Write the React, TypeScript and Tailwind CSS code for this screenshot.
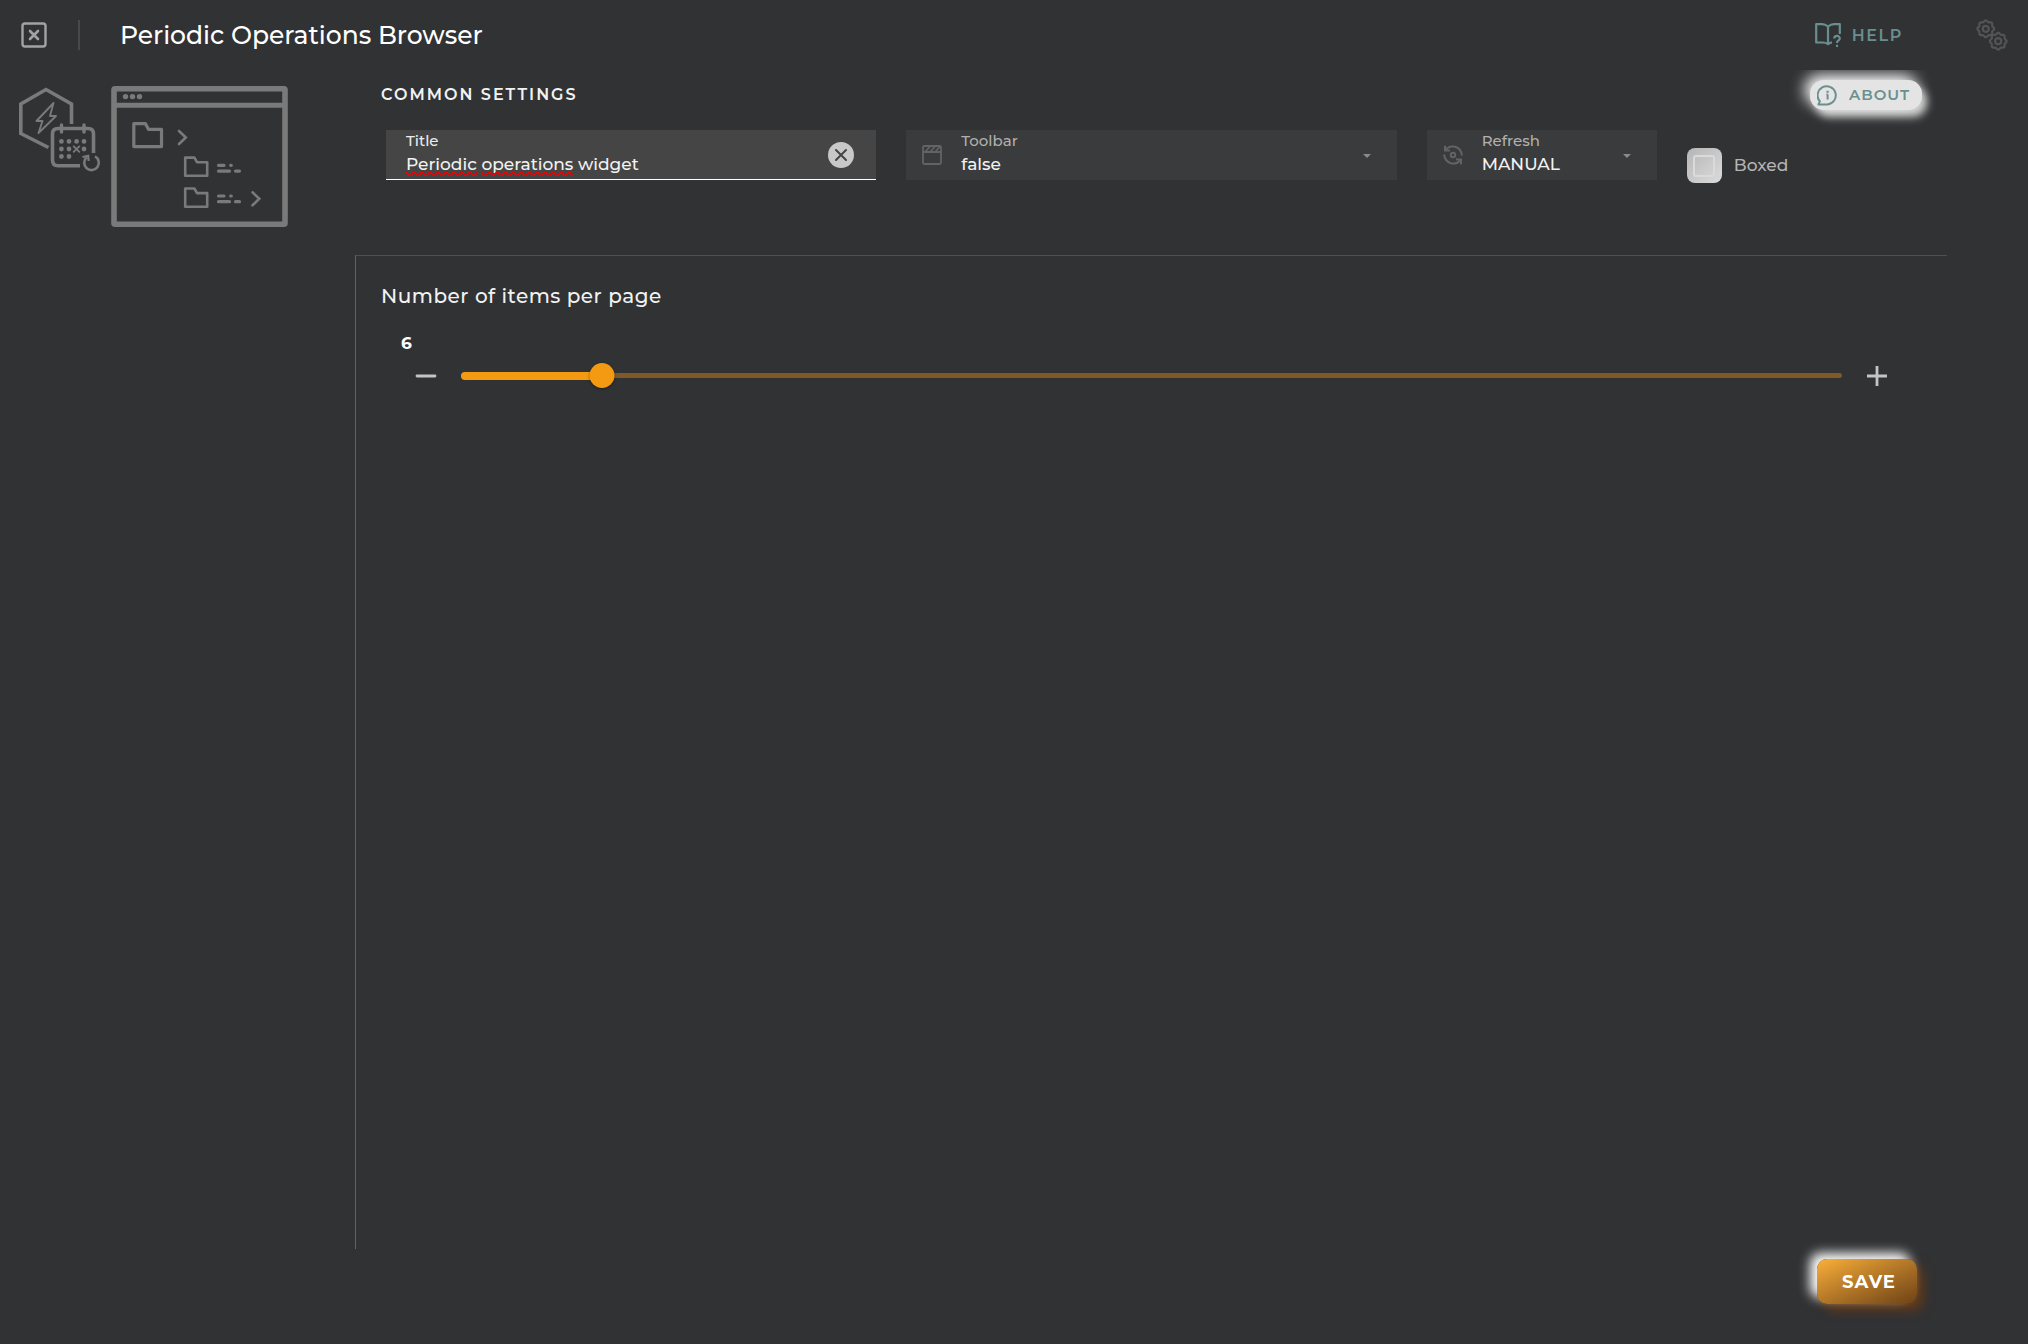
import React, { useState } from 'react';

const MIN_ITEMS = 1;
const MAX_ITEMS = 50;

function CloseIcon() {
  return (
    <svg width="26" height="26" viewBox="0 0 26 26" fill="none" stroke="currentColor">
      <rect x="1.5" y="1.5" width="23" height="23" rx="2.5" strokeWidth="2.4" />
      <path d="M9 9l8 8M17 9l-8 8" strokeWidth="2.6" strokeLinecap="round" />
    </svg>
  );
}

function HelpIcon() {
  return (
    <svg width="26" height="24" viewBox="0 0 26 24" fill="none" stroke="currentColor" strokeWidth="2.2">
      <path d="M13 3.5C11 1.8 9 1.2 7 1.2H1.2V19.5H7.5C9.8 19.5 11.5 20 13 21.2C14 20.3 15.3 19.6 17 19.4" strokeLinejoin="round" />
      <path d="M13 3.5C15 1.8 17 1.2 19 1.2H24.8V11M13 3.5V21" strokeLinejoin="round" />
      <path d="M19.2 15.6C19.2 12 24.8 12 24.8 15.4C24.8 17.6 22 17.4 22 20" />
      <path d="M21 22.8h2" />
    </svg>
  );
}

function AboutIcon() {
  return (
    <svg width="21" height="21" viewBox="0 0 21 21" fill="none" stroke="currentColor" strokeWidth="2">
      <path d="M1.4 19.4L2.9 16.4A9.1 9.1 0 1 1 10.4 19.4Z" strokeLinejoin="round" />
      <path d="M10.6 9.2V14.4M9.4 9.4H10.6" />
      <path d="M10.6 5.8V7.8" strokeWidth="2.2" />
    </svg>
  );
}

const gearPath = (cx: number, cy: number) => {
  const points: string[] = [];
  for (let i = 0; i < 96; i++) {
    const a = (i / 96) * Math.PI * 2;
    const r = 7.7 + 0.7 * Math.cos(8 * a);
    points.push(`${(cx + r * Math.cos(a)).toFixed(2)} ${(cy + r * Math.sin(a)).toFixed(2)}`);
  }
  return `M${points.join('L')}Z`;
};

function GearsIcon() {
  return (
    <svg width="32" height="32" viewBox="0 0 32 32" fill="none" stroke="currentColor" strokeWidth="2.2">
      <path d={gearPath(9.8, 9.8)} />
      <circle cx="9.8" cy="9.8" r="3" />
      <path d={gearPath(22.2, 22.2)} />
      <circle cx="22.2" cy="22.2" r="3" />
    </svg>
  );
}

function ToolbarIcon() {
  return (
    <svg width="20" height="20" viewBox="0 0 20 20" fill="none" stroke="currentColor" strokeWidth="1.8">
      <rect x="1" y="1" width="18" height="18" rx="1.5" />
      <path d="M1 7h18M3.5 6.5L8 1.5M8.5 6.5L13 1.5M13.5 6.5L18 1.5" />
    </svg>
  );
}

function RefreshIcon() {
  return (
    <svg width="20" height="20" viewBox="0 0 20 20" fill="none" stroke="currentColor" strokeWidth="2">
      <circle cx="10" cy="10" r="2.2" />
      <path d="M2.6 5.2C7 -1 18 .6 18.9 10.6" />
      <path d="M2 .8V5.6H7" />
      <path d="M17.4 14.8C13 21 2 19.4 1.1 9.4" />
      <path d="M18 19.2V14.4H13" />
    </svg>
  );
}

function Caret() {
  return (
    <svg width="8" height="4" viewBox="0 0 8 4" fill="currentColor">
      <path d="M0 0h8L4 4z" />
    </svg>
  );
}

// Hexagon with a bolt, and the calendar in front of it
function OperationsIcon() {
  return (
    <svg width="84" height="88" viewBox="18 86 84 88" fill="none" stroke="currentColor" strokeWidth="3.6">
      <path d="M71.5 124V104L46 89.5L20.8 104V133.5L48.5 147.5" />
      <path d="M53.5 103L36.5 121H42.5L38.5 133L56 116H50Z" strokeWidth="1.9" strokeLinejoin="round" />
      <path d="M93.5 153V134Q93.5 128.5 88 128.5H58Q52.5 128.5 52.5 134V160Q52.5 165.8 58 165.8H80" />
      <path d="M61.5 125V132M84 125V132" strokeWidth="3.4" strokeLinecap="round" />
      <path
        d="M61.4 141.4h.01M69 141.4h.01M76.6 141.4h.01M84 141.4h.01M61.4 149h.01M69 149h.01M84 149h.01M61.4 156.5h.01M69 156.5h.01"
        strokeWidth="4.8"
        strokeLinecap="round"
      />
      <path d="M73.2 145.8l6.6 6.6M79.8 145.8l-6.6 6.6" strokeWidth="1.8" />
      <path d="M95 156.4A7.3 7.3 0 1 1 86.6 157.4" strokeWidth="2.6" />
      <path d="M82.5 157L88.2 155.8L88.6 161" strokeWidth="2.2" />
    </svg>
  );
}

// Browser window holding a folder tree
function BrowserIcon() {
  return (
    <svg width="177" height="141" viewBox="111 86 177 141" fill="none" stroke="currentColor" strokeWidth="2.6">
      <rect x="114" y="88.8" width="171" height="135.4" rx="1" strokeWidth="5.6" />
      <path d="M114 105.2H285" strokeWidth="5" />
      <path d="M125.5 96.6h.01M132.5 96.6h.01M139.5 96.6h.01" strokeWidth="5.4" strokeLinecap="round" />
      <path d="M133.8 123.7H145.5L148.4 129.3H161.5V146.6H133.8Z" strokeWidth="3.2" strokeLinejoin="round" />
      <path d="M179 131L185.8 137.5L179 144" strokeLinecap="round" />
      <path d="M185.2 157.6H194.4L197 162.2H207.2V175.8H185.2Z" strokeLinejoin="round" />
      <path d="M218.5 165.3H224M230.7 165.3h.6M218.5 171.1H229.5M235.5 171.1H239.5" strokeWidth="3.2" strokeLinecap="round" />
      <path d="M185.2 188.5H194.4L197 193.1H207.2V206.7H185.2Z" strokeLinejoin="round" />
      <path d="M218.5 196H224M230.7 196h.6M218.5 201.7H229.5M235.5 201.7H239.5" strokeWidth="3.2" strokeLinecap="round" />
      <path d="M252.5 192.3L259.3 198.8L252.5 205.3" strokeLinecap="round" />
    </svg>
  );
}

function Squiggle({ className }: { className: string }) {
  return (
    <svg height="4" className={className} aria-hidden="true">
      <defs>
        <pattern id="squiggle" width="8" height="4" patternUnits="userSpaceOnUse">
          <path d="M-2 2Q0 -1 2 2T6 2T10 2" fill="none" stroke="#f00000" strokeWidth="1.6" />
        </pattern>
      </defs>
      <rect width="100%" height="4" fill="url(#squiggle)" />
    </svg>
  );
}

function SelectField({
  id,
  label,
  icon,
  options,
  className,
}: {
  id: string;
  label: string;
  icon: React.ReactNode;
  options: string[];
  className: string;
}) {
  return (
    <div className={`relative flex h-[50px] items-center bg-[#3a3b3c] pl-4 ${className}`}>
      <span className="w-[39px] shrink-0 text-[#626363]">{icon}</span>
      <div className="flex min-w-0 flex-1 flex-col">
        <label htmlFor={id} className="text-[15px] leading-[18px] text-[#b0b0b0]">
          {label}
        </label>
        <select id={id} className="h-7 w-full appearance-none bg-transparent text-[17px] leading-7 text-[#f2f2f2] outline-none">
          {options.map((o) => (
            <option key={o}>{o}</option>
          ))}
        </select>
      </div>
      <span className="pointer-events-none absolute top-6 right-[26px] text-[#8a8a8a]">
        <Caret />
      </span>
    </div>
  );
}

export default function App() {
  const [title, setTitle] = useState('Periodic operations widget');
  const [items, setItems] = useState(6);
  const [boxed, setBoxed] = useState(false);

  const clamp = (n: number) => Math.min(MAX_ITEMS, Math.max(MIN_ITEMS, n));
  const percent = ((items - MIN_ITEMS) / (MAX_ITEMS - MIN_ITEMS)) * 100;

  return (
    <div className="flex min-h-screen flex-col bg-[#313234] font-['Montserrat','Inter',sans-serif] font-medium text-[#f2f2f2]">
      <header className="flex h-[70px] items-center pr-5 pl-[21px]">
        <button type="button" aria-label="Close" className="text-[#a3a3a3]">
          <CloseIcon />
        </button>
        <span className="ml-[31px] h-[30px] w-0.5 bg-[#48494b]" />
        <h1 className="ml-10 text-[25px] leading-8 font-medium text-white">Periodic Operations Browser</h1>
        <a href="#help" className="ml-auto flex items-center gap-[11px] text-base font-semibold tracking-widest text-[#6a8e90]">
          <HelpIcon />
          <span className="pt-0.5">HELP</span>
        </a>
        <span className="ml-[73px] text-[#535454]">
          <GearsIcon />
        </span>
      </header>

      <div className="flex flex-1">
        <aside className="flex w-[355px] shrink-0 items-start gap-[9px] pt-4 pl-[18px] text-[#7a7a7a]">
          <OperationsIcon />
          <BrowserIcon />
        </aside>

        <main className="mr-[81px] flex flex-1 flex-col">
          <section className="h-[185px]">
            <div className="-mr-[81px] flex h-[60px] items-start justify-between overflow-hidden pt-2.5 pr-[106px] pl-[26px]">
              <h2 className="pt-[3px] text-base leading-6 font-semibold tracking-[2px]">COMMON SETTINGS</h2>
              <button
                type="button"
                className="flex h-[30px] w-28 items-center gap-[11px] rounded-[14px] bg-[#e4e4e4] pl-[7px] text-[15px] font-semibold tracking-[1px] text-[#6a9090] shadow-[-5px_-5px_15px_#ffffff,5px_7px_8px_#d0d0d0]"
              >
                <AboutIcon />
                <span className="pt-px">ABOUT</span>
              </button>
            </div>
            <div className="grid grid-cols-12 gap-[30px] pr-[30px] pl-[31px]">
              <div className="relative col-span-4 flex h-[50px] items-center border-b border-white bg-[#454545] pr-[22px] pl-5">
                <div className="relative flex min-w-0 flex-1 flex-col">
                  <label htmlFor="title" className="text-[15px] leading-[18px] text-[#ececec]">
                    Title
                  </label>
                  <input
                    id="title"
                    value={title}
                    spellCheck={false}
                    onChange={(e) => setTitle(e.target.value)}
                    className="h-7 w-full bg-transparent text-[17px] leading-7 outline-none"
                  />
                  <div className="pointer-events-none absolute bottom-0.5 left-0 flex gap-1">
                    <Squiggle className="w-[71px]" />
                    <Squiggle className="w-[92px]" />
                  </div>
                </div>
                <button
                  type="button"
                  aria-label="Clear title"
                  onClick={() => setTitle('')}
                  className="flex size-[26px] items-center justify-center rounded-full bg-[#c8c8c8] text-[#454545]"
                >
                  <svg width="12" height="12" viewBox="0 0 12 12" stroke="currentColor" strokeWidth="2" strokeLinecap="round">
                    <path d="M1 1l10 10M11 1L1 11" />
                  </svg>
                </button>
              </div>

              <SelectField id="toolbar" label="Toolbar" icon={<ToolbarIcon />} options={['false', 'true']} className="col-span-4" />
              <SelectField id="refresh" label="Refresh" icon={<RefreshIcon />} options={['MANUAL', 'AUTO']} className="col-span-2" />

              <label className="col-span-2 flex items-center gap-3 self-start pt-[18px] text-[17px] text-[#b4b4b4]">
                <span className="flex size-[35px] items-center justify-center rounded-lg bg-linear-to-br from-[#b5b5b5] to-[#dcdcdc]">
                  <input
                    type="checkbox"
                    checked={boxed}
                    onChange={(e) => setBoxed(e.target.checked)}
                    className="size-[22px] appearance-none rounded-[3px] border-2 border-[#dadada] checked:bg-[#f39a12]"
                  />
                </span>
                Boxed
              </label>
            </div>
          </section>

          <section className="flex-1 border-t border-l border-[#4f5052] border-l-[#626364] pl-[25px]">
            <h3 className="pt-[26px] text-xl leading-7 tracking-wide">
              <label htmlFor="items">Number of items per page</label>
            </h3>
            <output htmlFor="items" className="mt-[21px] block pl-5 text-[17px] leading-6 font-bold text-white">
              {items}
            </output>
            <div className="mr-[57px] flex h-[41px] items-center pl-8 text-[#c4c4c4]">
              <button type="button" aria-label="Fewer items" onClick={() => setItems(clamp(items - 1))} className="py-2">
                <svg width="26" height="26" viewBox="0 0 26 26" stroke="currentColor" strokeWidth="2.8" strokeLinecap="round">
                  <path d="M4 13h18" />
                </svg>
              </button>
              <div className="relative mx-[22px] flex h-6 flex-1 items-center">
                <div className="h-[5px] w-full rounded-full bg-[#7d5a26]" />
                <div className="absolute left-0 h-2 rounded-full bg-[#f39a12]" style={{ width: `${percent}%` }} />
                <div
                  className="absolute size-[25px] -translate-x-1/2 rounded-full bg-[#f39a12] shadow-[0_1px_3px_rgba(0,0,0,0.4)]"
                  style={{ left: `${percent}%` }}
                />
                <input
                  id="items"
                  type="range"
                  min={MIN_ITEMS}
                  max={MAX_ITEMS}
                  value={items}
                  onChange={(e) => setItems(Number(e.target.value))}
                  className="absolute inset-0 w-full cursor-pointer opacity-0"
                />
              </div>
              <button type="button" aria-label="More items" onClick={() => setItems(clamp(items + 1))} className="py-2">
                <svg width="26" height="26" viewBox="0 0 26 26" stroke="currentColor" strokeWidth="2.8">
                  <path d="M3 13h20M13 3v20" />
                </svg>
              </button>
            </div>
          </section>
        </main>
      </div>

      <footer className="flex h-[95px] items-start justify-end pt-2.5 pr-[111px]">
        <button
          type="submit"
          className="h-[45px] w-[100px] rounded-[10px] bg-linear-to-br from-[#fbb038] to-[#6e4217] pl-1 text-lg font-bold tracking-[1px] text-white shadow-[-7px_-6px_12px_#ffffff,6px_6px_12px_#663a14]"
        >
          SAVE
        </button>
      </footer>
    </div>
  );
}
